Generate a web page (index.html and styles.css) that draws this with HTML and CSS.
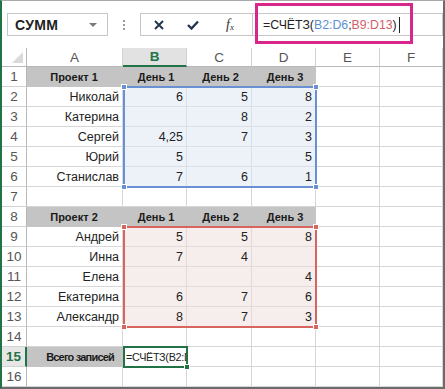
FILE: index.html
```html
<!DOCTYPE html>
<html lang="ru">
<head>
<meta charset="utf-8">
<title>СЧЁТЗ</title>
<link rel="stylesheet" href="styles.css">
</head>
<body>
<div class="win">
  <div class="fbar">
    <div class="namebox"><span class="nb-text">СУММ</span><span class="nb-arrow"></span></div>
    <div class="grip"><i></i><i></i><i></i></div>
    <div class="btns">
      <svg class="ico-x" width="10" height="10" viewBox="0 0 10 10"><path d="M1 1 L9 9 M9 1 L1 9" stroke="#24364f" stroke-width="2" fill="none"/></svg>
      <svg class="ico-ok" width="12" height="10" viewBox="0 0 12 10"><path d="M1 5 L4.5 8.5 L11 1.5" stroke="#24364f" stroke-width="2.4" fill="none"/></svg>
      <span class="fx">f<sub>x</sub></span>
    </div>
    <div class="formula">=СЧЁТЗ(<span class="rb">B2:D6</span>;<span class="rr">B9:D13</span>)<span class="caret"></span></div>
  </div>
  <div class="hilite"></div>

  <div class="sheet">
    <div class="c corner"><span class="tri"></span></div>
    <div class="c ch">A</div><div class="c ch sel">B</div><div class="c ch">C</div><div class="c ch">D</div><div class="c ch">E</div><div class="c ch">F</div>

    <div class="c rh">1</div><div class="c g">Проект 1</div><div class="c g gc">День 1</div><div class="c g gc">День 2</div><div class="c g gc">День 3</div><div class="c"></div><div class="c"></div>
    <div class="c rh">2</div><div class="c">Николай</div><div class="c b">6</div><div class="c b">5</div><div class="c b">8</div><div class="c"></div><div class="c"></div>
    <div class="c rh">3</div><div class="c">Катерина</div><div class="c b"></div><div class="c b">8</div><div class="c b">2</div><div class="c"></div><div class="c"></div>
    <div class="c rh">4</div><div class="c">Сергей</div><div class="c b">4,25</div><div class="c b">7</div><div class="c b">3</div><div class="c"></div><div class="c"></div>
    <div class="c rh">5</div><div class="c">Юрий</div><div class="c b">5</div><div class="c b"></div><div class="c b">5</div><div class="c"></div><div class="c"></div>
    <div class="c rh">6</div><div class="c">Станислав</div><div class="c b">7</div><div class="c b">6</div><div class="c b">1</div><div class="c"></div><div class="c"></div>
    <div class="c rh">7</div><div class="c"></div><div class="c"></div><div class="c"></div><div class="c"></div><div class="c"></div><div class="c"></div>
    <div class="c rh">8</div><div class="c g">Проект 2</div><div class="c g gc">День 1</div><div class="c g gc">День 2</div><div class="c g gc">День 3</div><div class="c"></div><div class="c"></div>
    <div class="c rh">9</div><div class="c">Андрей</div><div class="c p">5</div><div class="c p">5</div><div class="c p">8</div><div class="c"></div><div class="c"></div>
    <div class="c rh">10</div><div class="c">Инна</div><div class="c p">7</div><div class="c p">4</div><div class="c p"></div><div class="c"></div><div class="c"></div>
    <div class="c rh">11</div><div class="c">Елена</div><div class="c p"></div><div class="c p"></div><div class="c p">4</div><div class="c"></div><div class="c"></div>
    <div class="c rh">12</div><div class="c">Екатерина</div><div class="c p">6</div><div class="c p">7</div><div class="c p">6</div><div class="c"></div><div class="c"></div>
    <div class="c rh">13</div><div class="c">Александр</div><div class="c p">8</div><div class="c p">7</div><div class="c p">3</div><div class="c"></div><div class="c"></div>
    <div class="c rh">14</div><div class="c"></div><div class="c"></div><div class="c"></div><div class="c"></div><div class="c"></div><div class="c"></div>
    <div class="c rh rsel">15</div><div class="c g gr">Всего записей</div><div class="c edit">=СЧЁТЗ(B2:D6;B9:D13)</div><div class="c"></div><div class="c"></div><div class="c"></div><div class="c"></div>
    <div class="c rh">16</div><div class="c"></div><div class="c"></div><div class="c"></div><div class="c"></div><div class="c"></div><div class="c"></div>

    <div class="range range-blue"><i class="h tl"></i><i class="h tr"></i><i class="h bl"></i><i class="h br"></i></div>
    <div class="range range-red"><i class="h tl"></i><i class="h tr"></i><i class="h bl"></i><i class="h br"></i></div>
    <div class="active"><i class="h br"></i></div>
  </div>
</div>
</body>
</html>
```

FILE: styles.css
```css
* { box-sizing: border-box; }
html, body { margin: 0; padding: 0; background: #fff; }
.win {
  position: relative;
  width: 445px;
  height: 389px;
  overflow: hidden;
  border-top: 1px solid #a9a9a9;
  border-left: 2px solid #217346;
  border-right: 2px solid #6b6b6b;
  border-bottom: 2px solid #6b6b6b;
  font-family: "Liberation Sans", Arial, sans-serif;
  color: #222;
}

/* formula bar */
.fbar {
  height: 47px;
  display: flex;
  align-items: flex-start;
  padding-top: 12px;
}
.namebox {
  margin-left: 5px;
  width: 101px;
  height: 23px;
  border: 1px solid #c6c6c6;
  display: flex;
  align-items: center;
  justify-content: space-between;
  padding: 0 10px 0 7px;
}
.nb-text { font-weight: bold; font-size: 14px; letter-spacing: 0.3px; color: #222; }
.nb-arrow {
  width: 0; height: 0;
  border-left: 4px solid transparent;
  border-right: 4px solid transparent;
  border-top: 4px solid #7a7a7a;
}
.grip {
  width: 32px;
  height: 23px;
  display: flex;
  flex-direction: column;
  align-items: center;
  justify-content: center;
  gap: 2px;
}
.grip i { display: block; width: 2px; height: 2px; background: #9a9a9a; }
.btns {
  width: 113px;
  height: 23px;
  border: 1px solid #c6c6c6;
  display: flex;
  align-items: center;
  padding-left: 13px;
}
.ico-x { margin-right: 23px; }
.ico-ok { margin-right: 27px; }
.fx {
  font-family: "Liberation Serif", "Times New Roman", serif;
  font-style: italic;
  font-size: 14px;
  color: #333;
}
.fx sub { font-size: 9px; vertical-align: -1px; }
.formula {
  flex: 1;
  height: 23px;
  border: 1px solid #c6c6c6;
  border-left: none;
  display: flex;
  align-items: center;
  padding-left: 10px;
  font-size: 12.3px;
  color: #222;
  white-space: nowrap;
}
.rb { color: #5d8fd3; }
.rr { color: #d6606a; }
.caret { display: inline-block; width: 1px; height: 16px; background: #222; margin-left: 2px; }

.hilite {
  position: absolute;
  left: 253px;
  top: 2px;
  width: 158px;
  height: 41px;
  border: 3px solid #d9268a;
}

/* sheet */
.sheet {
  position: relative;
  display: grid;
  grid-template-columns: 25px 96px 64px 65px 64px 64px 63px;
  grid-template-rows: 19px repeat(16, 20px);
  font-size: 12.5px;
}
.c {
  border-right: 1px solid #d6d6d6;
  border-bottom: 1px solid #d6d6d6;
  display: flex;
  align-items: center;
  justify-content: flex-end;
  padding: 0 3px 0 2px;
  white-space: nowrap;
  overflow: hidden;
  min-width: 0;
}
.ch, .rh {
  justify-content: center;
  color: #555;
  font-size: 13.5px;
  padding: 0;
  border-color: #d2d2d2;
}
.ch { border-bottom-color: #b8b8b8; }
.rh { border-right-color: #b8b8b8; }
.corner { position: relative; border-bottom-color: #b8b8b8; border-right-color: #b8b8b8; }
.tri {
  position: absolute;
  right: 3px;
  bottom: 3px;
  width: 0; height: 0;
  border-left: 11px solid transparent;
  border-bottom: 11px solid #dadada;
}
.ch.sel {
  background: #e2e2e2;
  color: #217346;
  font-weight: bold;
  border-bottom: 2px solid #217346;
}
.rh.rsel {
  background: #e6e6e6;
  color: #217346;
  font-weight: bold;
  border-right: 2px solid #217346;
}
.g {
  background: #c4c4c4;
  border-color: #c4c4c4;
  font-weight: bold;
  justify-content: center;
  font-size: 11px;
  color: #1a1a1a;
}
.gc { padding-left: 6px; }
.gr { justify-content: flex-end; padding-right: 8px; letter-spacing: -0.8px; }
.b { background: #edf2f9; border-color: #d9dfe8; }
.p { background: #f6eeec; border-color: #e3dad8; }
.edit { justify-content: flex-start; padding-left: 3px; font-size: 10.8px; letter-spacing: -0.3px; }

.range, .active {
  position: absolute;
  top: -1px;
  left: 0;
  right: -1px;
  bottom: -1px;
  pointer-events: none;
  border: 2px solid;
}
.range-blue { grid-area: 3 / 3 / 8 / 6; border-color: #6890d2; }
.range-red { grid-area: 10 / 3 / 15 / 6; border-color: #d7645e; }
.active { grid-area: 16 / 3 / 17 / 4; border-color: #217346; }
.h {
  position: absolute;
  width: 6px;
  height: 6px;
  border: 1px solid #fff;
}
.range-blue .h { background: #6890d2; }
.range-red .h { background: #d7645e; }
.active .h { background: #217346; }
.h.tl { left: -4px; top: -4px; }
.h.tr { right: -4px; top: -4px; }
.h.bl { left: -4px; bottom: -4px; }
.h.br { right: -4px; bottom: -4px; }
```
